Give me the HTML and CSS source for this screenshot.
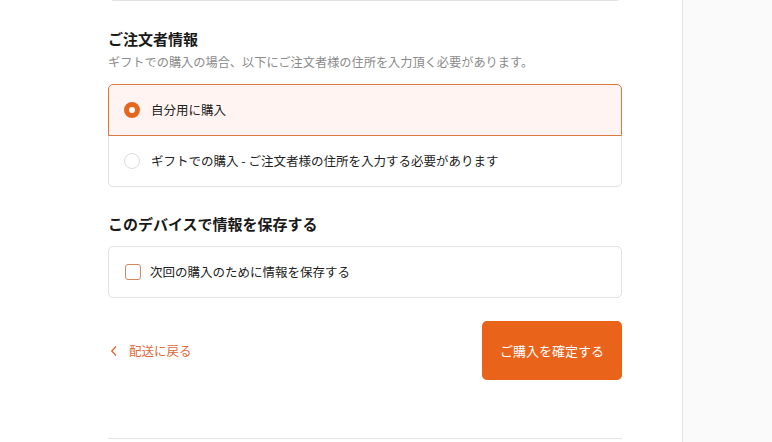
FILE: index.html
```html
<!DOCTYPE html>
<html lang="ja">
<head>
<meta charset="utf-8">
<title>ご注文者情報</title>
<link rel="stylesheet" href="styles.css">
</head>
<body>
<div class="page">
  <main class="main">
    <div class="prev-card"></div>

    <section class="section">
      <h2 class="title">ご注文者情報</h2>
      <p class="sub">ギフトでの購入の場合、以下にご注文者様の住所を入力頂く必要があります。</p>
      <div class="group">
        <label class="option selected">
          <span class="radio on"></span>
          <span class="opt-text">自分用に購入</span>
        </label>
        <label class="option last">
          <span class="radio"></span>
          <span class="opt-text">ギフトでの購入 - ご注文者様の住所を入力する必要があります</span>
        </label>
      </div>
    </section>

    <section class="section second">
      <h2 class="title">このデバイスで情報を保存する</h2>
      <div class="save-box">
        <span class="check"></span>
        <span class="opt-text">次回の購入のために情報を保存する</span>
      </div>
    </section>

    <div class="actions">
      <a class="back" href="#">
        <svg class="chev" width="8" height="12" viewBox="0 0 8 12"><path d="M6 1.5 L1.8 6 L6 10.5" fill="none" stroke="currentColor" stroke-width="1.4"/></svg>
        <span>配送に戻る</span>
      </a>
      <button class="confirm">ご購入を確定する</button>
    </div>

    <div class="footer-line"></div>
  </main>
  <aside class="aside"></aside>
</div>
</body>
</html>
```

FILE: styles.css
```css
html, body {
  margin: 0;
  padding: 0;
  height: 100%;
  overflow: hidden;
  background: #ffffff;
  font-family: "Noto Sans CJK JP", "Noto Sans", sans-serif;
  color: #222;
}

.page {
  display: flex;
  height: 442px;
}

.main {
  width: 514px;
  padding: 0 60px 0 108px;
  flex: none;
}

.aside {
  flex: 1;
  background: #fafafa;
  border-left: 1px solid #e4e4e4;
}

.prev-card {
  height: 20px;
  margin-top: -21px;
  border: 1px solid #e2e2e2;
  border-radius: 6px;
}

.section {
  margin-top: 27px;
}

.section.second {
  margin-top: 26px;
}

.title {
  margin: 0;
  font-size: 15px;
  line-height: 22px;
  font-weight: 700;
  color: #1a1a1a;
}

.sub {
  margin: 3px 0 0;
  font-size: 12.2px;
  line-height: 18px;
  color: #8a8a8a;
}

.group {
  margin-top: 13px;
  display: flex;
  flex-direction: column;
}

.option {
  position: relative;
  display: flex;
  align-items: center;
  gap: 11px;
  height: 50px;
  padding: 0 15px;
  border: 1px solid #e2e2e2;
  border-radius: 5px 5px 0 0;
  background: #fff;
}

.option.last {
  margin-top: -1px;
  border-radius: 0 0 5px 5px;
}

.option.selected {
  z-index: 1;
  background: #fff4f1;
  border-color: #d9793f;
}

.radio {
  width: 16px;
  height: 16px;
  box-sizing: border-box;
  border-radius: 50%;
  border: 1px solid #dcdcdc;
  background: #fff;
  flex: none;
}

.radio.on {
  border: 5px solid #e5661f;
}

.opt-text {
  font-size: 12.5px;
  line-height: 18px;
  color: #222;
}

.save-box {
  margin-top: 11px;
  display: flex;
  align-items: center;
  gap: 9px;
  height: 50px;
  padding: 0 16px;
  border: 1px solid #e2e2e2;
  border-radius: 5px;
}

.check {
  width: 16px;
  height: 16px;
  box-sizing: border-box;
  border: 1px solid #d2875c;
  border-radius: 3px;
  flex: none;
}

.actions {
  margin-top: 23px;
  display: flex;
  align-items: center;
  justify-content: space-between;
}

.back {
  display: flex;
  align-items: center;
  gap: 11px;
  padding-left: 2px;
  color: #e0693a;
  text-decoration: none;
  font-size: 12.5px;
  line-height: 18px;
}

.chev {
  display: block;
}

.confirm {
  width: 140px;
  height: 59px;
  border: none;
  border-radius: 5px;
  background: #e9631a;
  color: #fff;
  font-family: inherit;
  font-size: 13px;
  cursor: pointer;
}

.footer-line {
  margin-top: 58px;
  border-top: 1px solid #e2e2e2;
}
```
